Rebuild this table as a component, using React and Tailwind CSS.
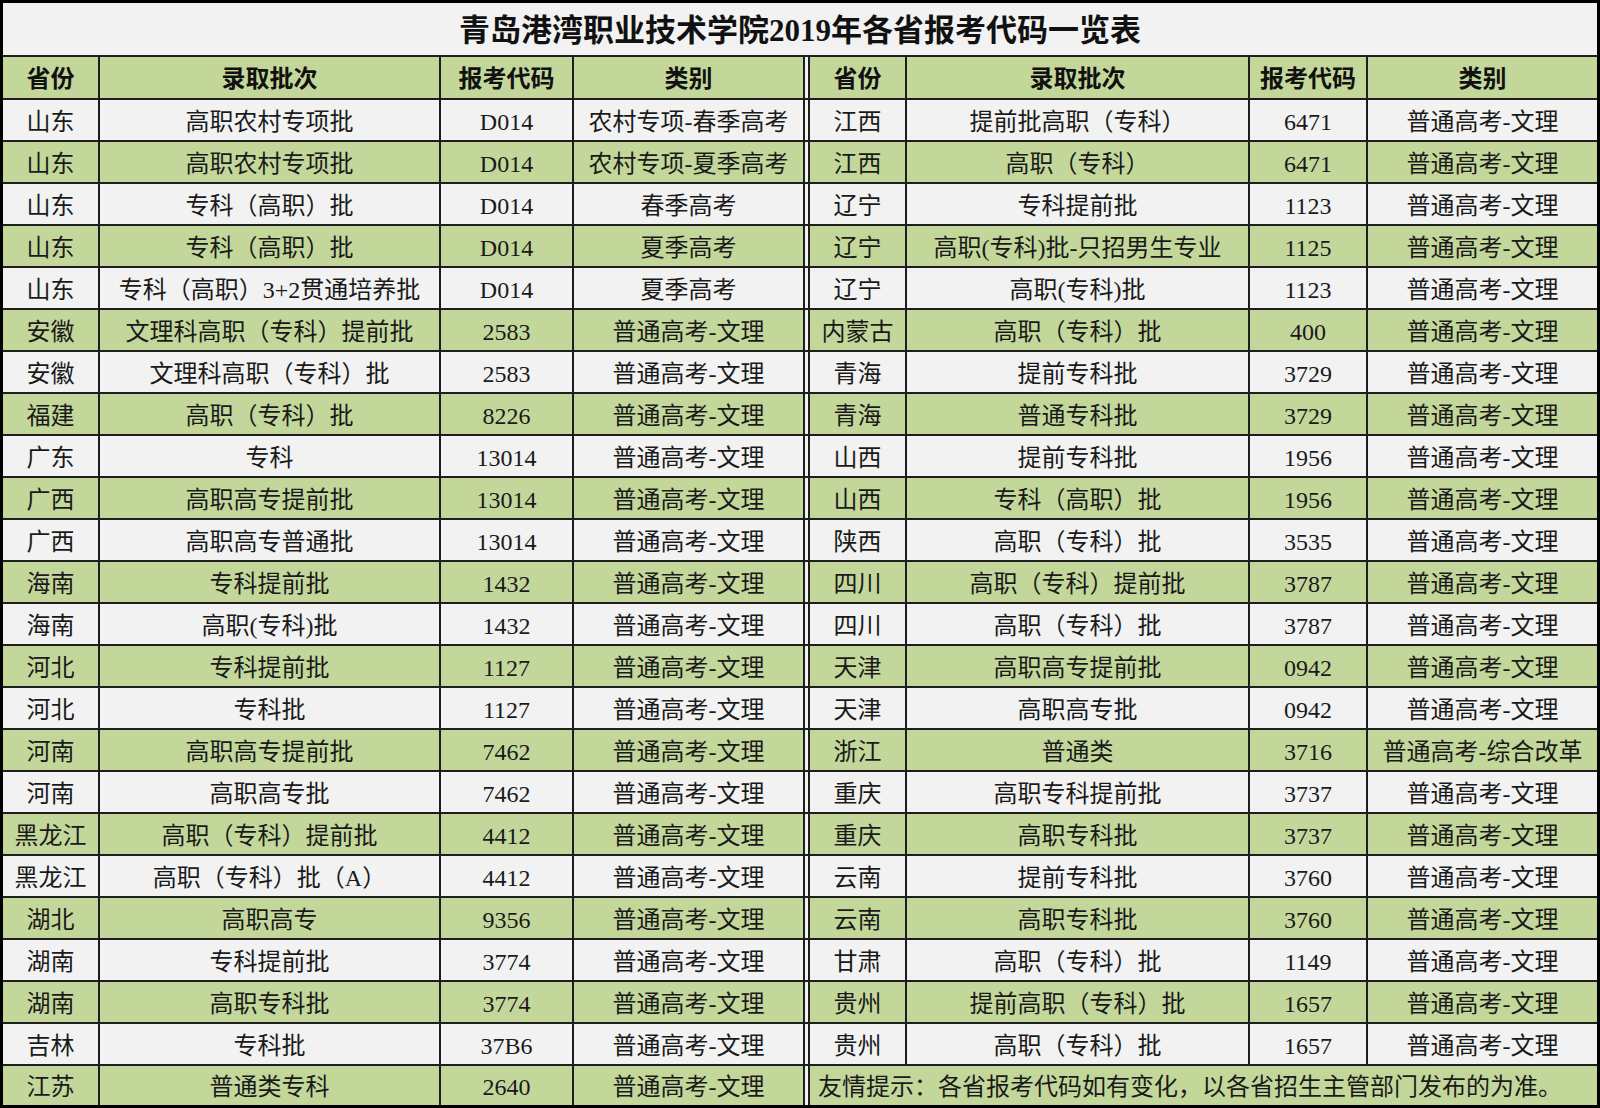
import React from "react";

const rows = [
  ["山东", "高职农村专项批", "D014", "农村专项-春季高考", "江西", "提前批高职（专科）", "6471", "普通高考-文理"],
  ["山东", "高职农村专项批", "D014", "农村专项-夏季高考", "江西", "高职（专科）", "6471", "普通高考-文理"],
  ["山东", "专科（高职）批", "D014", "春季高考", "辽宁", "专科提前批", "1123", "普通高考-文理"],
  ["山东", "专科（高职）批", "D014", "夏季高考", "辽宁", "高职(专科)批-只招男生专业", "1125", "普通高考-文理"],
  ["山东", "专科（高职）3+2贯通培养批", "D014", "夏季高考", "辽宁", "高职(专科)批", "1123", "普通高考-文理"],
  ["安徽", "文理科高职（专科）提前批", "2583", "普通高考-文理", "内蒙古", "高职（专科）批", "400", "普通高考-文理"],
  ["安徽", "文理科高职（专科）批", "2583", "普通高考-文理", "青海", "提前专科批", "3729", "普通高考-文理"],
  ["福建", "高职（专科）批", "8226", "普通高考-文理", "青海", "普通专科批", "3729", "普通高考-文理"],
  ["广东", "专科", "13014", "普通高考-文理", "山西", "提前专科批", "1956", "普通高考-文理"],
  ["广西", "高职高专提前批", "13014", "普通高考-文理", "山西", "专科（高职）批", "1956", "普通高考-文理"],
  ["广西", "高职高专普通批", "13014", "普通高考-文理", "陕西", "高职（专科）批", "3535", "普通高考-文理"],
  ["海南", "专科提前批", "1432", "普通高考-文理", "四川", "高职（专科）提前批", "3787", "普通高考-文理"],
  ["海南", "高职(专科)批", "1432", "普通高考-文理", "四川", "高职（专科）批", "3787", "普通高考-文理"],
  ["河北", "专科提前批", "1127", "普通高考-文理", "天津", "高职高专提前批", "0942", "普通高考-文理"],
  ["河北", "专科批", "1127", "普通高考-文理", "天津", "高职高专批", "0942", "普通高考-文理"],
  ["河南", "高职高专提前批", "7462", "普通高考-文理", "浙江", "普通类", "3716", "普通高考-综合改革"],
  ["河南", "高职高专批", "7462", "普通高考-文理", "重庆", "高职专科提前批", "3737", "普通高考-文理"],
  ["黑龙江", "高职（专科）提前批", "4412", "普通高考-文理", "重庆", "高职专科批", "3737", "普通高考-文理"],
  ["黑龙江", "高职（专科）批（A）", "4412", "普通高考-文理", "云南", "提前专科批", "3760", "普通高考-文理"],
  ["湖北", "高职高专", "9356", "普通高考-文理", "云南", "高职专科批", "3760", "普通高考-文理"],
  ["湖南", "专科提前批", "3774", "普通高考-文理", "甘肃", "高职（专科）批", "1149", "普通高考-文理"],
  ["湖南", "高职专科批", "3774", "普通高考-文理", "贵州", "提前高职（专科）批", "1657", "普通高考-文理"],
  ["吉林", "专科批", "37B6", "普通高考-文理", "贵州", "高职（专科）批", "1657", "普通高考-文理"],
  ["江苏", "普通类专科", "2640", "普通高考-文理", null, null, null, null],
];

const grid = "grid grid-cols-[97px_341px_133px_231px_5px_97px_343px_118px_229px]";
const cell = "flex items-center justify-center border-r-2 border-[#1e1e1e] whitespace-nowrap overflow-hidden pt-[3px]";

function Row({ data, green, header, last }) {
  const bg = green ? "bg-[#c4d79b]" : "bg-[#f2f2f2]";
  const h = header ? "h-[43px]" : last ? "h-[39px]" : "h-[42px]";
  const b = last ? "" : "border-b-2 border-[#1e1e1e]";
  const txt = header ? "font-bold text-[#111]" : "text-[#1a1a1a]";
  const left = data.slice(0, 4);
  const right = data.slice(4);
  return (
    <div className={`${grid} ${h} ${b} ${txt}`}>
      {left.map((t, i) => (
        <div key={i} className={`${cell} ${bg}`}>{t}</div>
      ))}
      <div className={`${cell} bg-[#f2f2f2]`}></div>
      {right[0] === null ? (
        <div className={`col-span-4 flex items-center pl-[8px] pt-[3px] ${bg} whitespace-nowrap`}>
          友情提示：各省报考代码如有变化，以各省招生主管部门发布的为准。
        </div>
      ) : (
        right.map((t, i) => (
          <div key={i} className={`${i === 3 ? "flex items-center justify-center whitespace-nowrap overflow-hidden pt-[3px]" : cell} ${bg}`}>{t}</div>
        ))
      )}
    </div>
  );
}

export default function App() {
  const header = ["省份", "录取批次", "报考代码", "类别", "省份", "录取批次", "报考代码", "类别"];
  return (
    <div
      className="w-[1600px] h-[1108px] bg-black border-x-[3px] border-y-[3px] border-black overflow-hidden text-[24px] leading-none"
      style={{ fontFamily: '"Liberation Serif", "Noto Sans CJK SC", serif' }}
    >
      <div className="h-[54px] bg-[#f2f2f2] border-b-2 border-[#1e1e1e] flex items-center justify-center pt-[2px] text-[31px] font-bold text-[#111]">
        青岛港湾职业技术学院2019年各省报考代码一览表
      </div>
      <Row data={header} green header />
      {rows.map((r, i) => (
        <Row key={i} data={r} green={i % 2 === 1} last={i === rows.length - 1} />
      ))}
    </div>
  );
}
